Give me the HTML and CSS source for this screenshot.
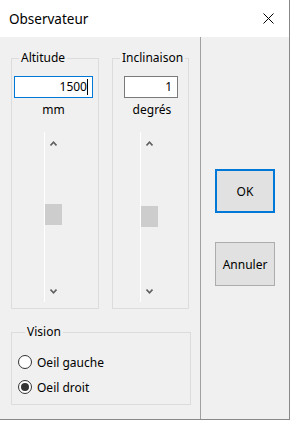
FILE: index.html
```html
<!DOCTYPE html>
<html lang="fr">
<head>
<meta charset="utf-8">
<title>Observateur</title>
<link rel="stylesheet" href="styles.css">
</head>
<body>
<div class="window">
  <div class="titlebar">
    <span class="title">Observateur</span>
    <svg class="close" width="11" height="11" viewBox="0 0 11 11"><path d="M0.5 0.5 L10.5 10.5 M10.5 0.5 L0.5 10.5" stroke="#000" stroke-width="1" fill="none"/></svg>
  </div>
  <div class="client">
    <div class="main">
      <div class="groups">
        <fieldset class="group group-alt">
          <legend>Altitude</legend>
          <div class="edit edit-focus"><span>1500</span><span class="caret"></span></div>
          <div class="unit">mm</div>
          <div class="scroll">
            <div class="arrow"><svg width="7" height="5" viewBox="0 0 7 5"><path d="M0.5 4.5 L3.5 1.2 L6.5 4.5" stroke="#606060" stroke-width="1.6" fill="none"/></svg></div>
            <div class="track"><div class="thumb" style="margin-top:50px"></div></div>
            <div class="arrow"><svg width="7" height="5" viewBox="0 0 7 5"><path d="M0.5 0.5 L3.5 3.8 L6.5 0.5" stroke="#606060" stroke-width="1.6" fill="none"/></svg></div>
          </div>
        </fieldset>
        <fieldset class="group group-inc">
          <legend>Inclinaison</legend>
          <div class="edit"><span>1</span></div>
          <div class="unit">degrés</div>
          <div class="scroll">
            <div class="arrow"><svg width="7" height="5" viewBox="0 0 7 5"><path d="M0.5 4.5 L3.5 1.2 L6.5 4.5" stroke="#606060" stroke-width="1.6" fill="none"/></svg></div>
            <div class="track"><div class="thumb" style="margin-top:52px"></div></div>
            <div class="arrow"><svg width="7" height="5" viewBox="0 0 7 5"><path d="M0.5 0.5 L3.5 3.8 L6.5 0.5" stroke="#606060" stroke-width="1.6" fill="none"/></svg></div>
          </div>
        </fieldset>
      </div>
      <fieldset class="group vision">
        <legend>Vision</legend>
        <div class="radio"><span class="circle"></span><span>Oeil gauche</span></div>
        <div class="radio"><span class="circle checked"></span><span>Oeil droit</span></div>
      </fieldset>
    </div>
    <div class="side">
      <button class="btn btn-default">OK</button>
      <button class="btn">Annuler</button>
    </div>
  </div>
</div>
</body>
</html>
```
FILE: styles.css
```css
* { box-sizing: border-box; }
body {
  margin: 0;
  background: #fff;
  font-family: "Noto Sans", "DejaVu Sans", sans-serif;
  font-size: 12px;
  color: #000;
}
.window {
  width: 290px;
  height: 420px;
  display: flex;
  flex-direction: column;
  border-right: 1px solid #888;
  border-bottom: 1px solid #888;
}
.titlebar {
  height: 37px;
  flex: none;
  background: #fff;
  display: flex;
  align-items: center;
  justify-content: space-between;
  padding: 0 15px 0 9px;
}
.title { font-size: 13.5px; }
.close { display: block; }
.client {
  flex: 1;
  display: flex;
  background: #f0f0f0;
}
.main {
  width: 201px;
  flex: none;
  border-right: 1px solid #a0a0a0;
  padding: 13px 0 0 11px;
}
.groups {
  display: flex;
  gap: 13px;
}
.group {
  margin: 0;
  padding: 0 0 6px 0;
  border: 1px solid #dcdcdc;
  min-inline-size: 0;
}
.group legend {
  margin-left: 7px;
  padding: 0 2px;
  line-height: 16px;
}
.group-alt { width: 88px; }
.group-inc { width: 77px; }
.edit {
  height: 22px;
  margin-top: 10px;
  background: #fff;
  border: 1px solid #7a7a7a;
  display: flex;
  align-items: center;
  justify-content: flex-end;
  padding-right: 5px;
  line-height: 16px;
}
.group-alt .edit { width: 79px; margin-left: 2px; padding-right: 4px; }
.group-inc .edit { width: 54px; margin-left: 11px; }
.edit-focus { border-color: #0078d7; }
.caret {
  width: 1px;
  height: 16px;
  background: #000;
}
.unit {
  margin-top: 4px;
  line-height: 16px;
  text-align: center;
}
.group-alt .unit { padding-right: 3px; }
.group-inc .unit { padding-left: 3px; }
.scroll {
  margin-top: 14px;
  width: 18px;
  height: 170px;
  border-left: 1px solid #fff;
  display: flex;
  flex-direction: column;
}
.group-alt .scroll { margin-left: 32px; }
.group-inc .scroll { margin-left: 27px; }
.arrow {
  height: 22px;
  flex: none;
  display: flex;
  align-items: center;
  justify-content: center;
}
.arrow svg { display: block; }
.track { flex: 1; }
.thumb {
  height: 21px;
  background: #cdcdcd;
}
.vision {
  width: 180px;
  margin-top: 15px;
  padding: 12px 0 7px 6px;
  display: flex;
  flex-direction: column;
  gap: 5px;
}
.radio {
  height: 20px;
  display: flex;
  align-items: center;
  gap: 5px;
}
.circle {
  width: 14px;
  height: 14px;
  border: 1px solid #333;
  border-radius: 50%;
  background: #fff;
  display: flex;
  align-items: center;
  justify-content: center;
}
.circle.checked::after {
  content: "";
  width: 8px;
  height: 8px;
  border-radius: 50%;
  background: #333;
}
.side {
  flex: 1;
  padding: 132px 0 0 14px;
  display: flex;
  flex-direction: column;
  gap: 29px;
}
.btn {
  width: 60px;
  height: 44px;
  padding: 0;
  margin: 0;
  background: #e1e1e1;
  border: 1px solid #adadad;
  font: inherit;
  color: #000;
}
.btn-default { border: 2px solid #0078d7; }
```
